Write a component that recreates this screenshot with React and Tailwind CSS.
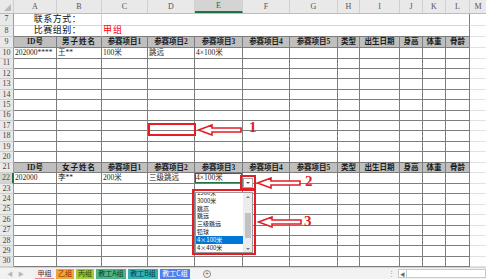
import React from "react";
import { clsx } from "clsx";

const W = [
  "w-[43px]",
  "w-[45px]",
  "w-[46px]",
  "w-[47px]",
  "w-[48px]",
  "w-[47px]",
  "w-[48px]",
  "w-[22px]",
  "w-[40px]",
  "w-[23px]",
  "w-[23px]",
  "w-[24px]",
];
const LETTERS = ["A", "B", "C", "D", "E", "F", "G", "H", "I", "J", "K", "L"];

const HEAD = (name) => [
  "ID号",
  name,
  "参赛项目1",
  "参赛项目2",
  "参赛项目3",
  "参赛项目4",
  "参赛项目5",
  "类型",
  "出生日期",
  "身高",
  "体重",
  "骨龄",
];

const empty = (n, h) =>
  Array.from({ length: n }, () => ({ h, kind: "data", cells: [] }));

const ROWS = [
  { n: 7, h: "h-[12px]", kind: "info", left: "联系方式：" },
  { n: 8, h: "h-[12px]", kind: "info", left: "比赛组别：", right: "甲组", last: true },
  { n: 9, h: "h-[11px]", kind: "head", cells: HEAD("男子姓名") },
  { n: 10, h: "h-[11px]", kind: "data", cells: ["202000****", "王**", "100米", "跳远", "4×100米"] },
  ...empty(10, "h-[10.7px]").map((r, i) => ({ ...r, n: 11 + i })),
  { n: 21, h: "h-[11px]", kind: "head", cells: HEAD("女子姓名") },
  { n: 22, h: "h-[11px]", kind: "data", sel: true, cells: ["202000", "李**", "200米", "三级跳远", "4×100米"] },
  ...empty(8, "h-[10.7px]").map((r, i) => ({ ...r, n: 23 + i })),
];

const LIST = ["1500米", "3000米", "跳高", "跳远", "三级跳远", "铅球", "4×100米", "4×400米"];

const TABS = [
  { t: "甲组", w: "w-[19px]", c: "bg-[#fbe9ec] text-[#333] border-b border-[#e88a9a]" },
  { t: "乙组", w: "w-[18px]", c: "bg-[#f3a33a] text-[#8a2a00]" },
  { t: "丙组", w: "w-[18px]", c: "bg-[#9ccd3c] text-[#2a3a00]" },
  { t: "教工A组", w: "w-[30px]", c: "bg-[#4bb487] text-[#0f3a26]" },
  { t: "教工B组", w: "w-[30px]", c: "bg-[#2fb2b6] text-[#083c40]" },
  { t: "教工C组", w: "w-[30px]", c: "bg-[#4f7ff0] text-white" },
];

function RowHead({ n, sel }) {
  return (
    <div
      className={clsx(
        "w-[14px] shrink-0 flex items-center justify-center border-b border-[#cfcfcf] text-[8px] leading-none",
        sel
          ? "bg-[#d4d4d4] text-[#1e6b41] border-r-2 border-r-[#217346]"
          : "bg-[#e9e9e9] text-[#444] border-r border-r-[#9a9a9a]"
      )}
    >
      {n}
    </div>
  );
}

function Arrow() {
  return (
    <svg width="46" height="12" viewBox="0 0 46 12">
      <polygon
        points="1.5,6 15,1 15,4 44,4 44,8 15,8 15,11"
        fill="#fff"
        stroke="#e41e26"
        strokeWidth="1.6"
      />
    </svg>
  );
}

function SheetRow({ row }) {
  if (row.kind === "info") {
    return (
      <div className={clsx("flex", row.h)}>
        <RowHead n={row.n} />
        <div
          className={clsx(
            "w-[88px] shrink-0 flex items-center justify-center border-r border-[#d4d4d4] text-[9px] leading-none text-[#111] tracking-[0.5px]",
            row.last ? "border-b border-b-[#7d7d7d]" : "border-b"
          )}
        >
          {row.left}
        </div>
        <div
          className={clsx(
            "w-[368px] shrink-0 flex items-center pl-[1px] border-r border-r-[#7d7d7d] text-[9px] leading-none text-[#ff0000] tracking-[1px]",
            row.last ? "border-b border-b-[#7d7d7d]" : "border-b border-b-[#d4d4d4]"
          )}
        >
          {row.right}
        </div>
        <div className="flex-1 border-b border-[#e2e2e2]" />
      </div>
    );
  }
  const head = row.kind === "head";
  return (
    <div className={clsx("flex", row.h)}>
      <RowHead n={row.n} sel={row.sel} />
      {W.map((w, i) => (
        <div
          key={i}
          className={clsx(
            "shrink-0 flex items-center border-r border-b border-[#7d7d7d] leading-none whitespace-nowrap overflow-hidden",
            w,
            head
              ? "bg-[#bfbfbf] justify-center font-bold text-[7.5px] text-[#1a1a1a]"
              : "pl-[1px] text-[7.5px] text-[#1a1a1a]",
            head && i === 1 && "tracking-[1px]",
            row.sel && i === 4 && "shadow-[inset_0_0_0_1px_#217346]"
          )}
        >
          {row.cells[i]}
        </div>
      ))}
      <div className="flex-1 border-b border-[#e2e2e2]" />
    </div>
  );
}

export default function App() {
  return (
    <div className="relative w-[486px] h-[279px] overflow-hidden bg-white flex flex-col font-['Liberation_Serif','Noto_Sans_CJK_SC',serif]">
      {/* sheet */}
      <div className="h-[267px] overflow-hidden flex flex-col">
        <div className="flex h-[14px] shrink-0 bg-[#e9e9e9] border-b border-[#bdbdbd]">
          <div className="w-[14px] shrink-0 flex items-end justify-end p-[2px] border-r border-[#cfcfcf]">
            <div className="w-0 h-0 border-l-[7px] border-l-transparent border-b-[7px] border-b-[#b9b9b9]" />
          </div>
          {W.map((w, i) => (
            <div
              key={i}
              className={clsx(
                "shrink-0 flex items-center justify-center border-r border-[#d0d0d0] text-[8px] leading-none",
                w,
                i === 4
                  ? "bg-[#d4d4d4] text-[#1e6b41] border-b-2 border-b-[#217346]"
                  : "text-[#555]"
              )}
            >
              {LETTERS[i]}
            </div>
          ))}
          <div className="flex-1 flex items-center justify-center text-[8px] leading-none text-[#555]">M</div>
        </div>
        {ROWS.map((r) => (
          <SheetRow key={r.n} row={r} />
        ))}
      </div>

      {/* sheet tabs */}
      <div className="h-[12px] shrink-0 flex items-center bg-[#f2f2f2] border-t border-[#d4d4d4] text-[7px] leading-none font-['Noto_Sans_CJK_SC',sans-serif]">
        <div className="w-[35px] shrink-0 flex items-center gap-[5px] pl-[7px] text-[6px] text-[#b8b8b8]">
          <span>◀</span>
          <span>▶</span>
        </div>
        <div className="flex items-center gap-[2px] h-full">
          {TABS.map((t) => (
            <div key={t.t} className={clsx("h-[10px] flex items-center justify-center shrink-0", t.w, t.c)}>
              {t.t}
            </div>
          ))}
        </div>
        <div className="ml-[13px] w-[8px] h-[8px] rounded-full border border-[#8a8a8a] flex items-center justify-center text-[7px] text-[#666]">
          +
        </div>
        <div className="ml-auto text-[7px] text-[#999] mr-[3px]">⋮</div>
        <div className="w-[9px] h-[9px] bg-white border border-[#c8c8c8] flex items-center justify-center text-[5px] text-[#666]">
          ◀
        </div>
        <div className="w-[79px] h-[9px] bg-white border border-l-0 border-[#c8c8c8]" />
      </div>

      {/* annotation 1 */}
      <div className="absolute left-[148px] top-[123px] w-[48px] h-[13px] border-2 border-[#e41e26]" />
      <div className="absolute left-[197px] top-[124px]">
        <Arrow />
      </div>
      <div className="absolute left-[249px] top-[120px] text-[15px] font-bold text-[#e41e26] leading-none">1</div>

      {/* annotation 2: dropdown button */}
      <div className="absolute left-[243px] top-[178px] w-[10px] h-[10px] bg-white border border-[#a8a8a8] flex items-center justify-center">
        <div className="w-0 h-0 border-l-[2px] border-r-[2px] border-t-[2px] border-l-transparent border-r-transparent border-t-[#555]" />
      </div>
      <div className="absolute left-[240px] top-[175px] w-[16px] h-[15px] border-2 border-[#e41e26]" />
      <div className="absolute left-[256px] top-[177px]">
        <Arrow />
      </div>
      <div className="absolute left-[305px] top-[174px] text-[15px] font-bold text-[#e41e26] leading-none">2</div>

      {/* annotation 3: dropdown list */}
      <div className="absolute left-[195px] top-[192px] w-[58px] h-[61px] bg-white border border-[#9a9a9a] overflow-hidden flex font-['Noto_Sans_CJK_SC',sans-serif]">
        <div className="flex-1 -mt-[4px] flex flex-col">
          {LIST.map((t) => (
            <div
              key={t}
              className={clsx(
                "h-[7.85px] shrink-0 flex items-center pl-[1px] text-[6px] leading-[6px] whitespace-nowrap",
                t === "4×100米" ? "bg-[#0078d7] text-white" : "text-[#111]"
              )}
            >
              {t}
            </div>
          ))}
        </div>
        <div className="w-[9px] shrink-0 bg-[#ececec] flex flex-col items-center">
          <div className="h-[7px] flex items-center">
            <div className="w-0 h-0 border-l-[2px] border-r-[2px] border-b-[2px] border-l-transparent border-r-transparent border-b-[#777]" />
          </div>
          <div className="mt-[13px] w-[6px] h-[25px] bg-[#c2c2c2]" />
          <div className="mt-auto h-[7px] flex items-center">
            <div className="w-0 h-0 border-l-[2px] border-r-[2px] border-t-[2px] border-l-transparent border-r-transparent border-t-[#777]" />
          </div>
        </div>
      </div>
      <div className="absolute left-[192px] top-[189px] w-[64px] h-[66px] border-2 border-[#e41e26]" />
      <div className="absolute left-[257px] top-[216px]">
        <Arrow />
      </div>
      <div className="absolute left-[304px] top-[214px] text-[15px] font-bold text-[#e41e26] leading-none">3</div>
    </div>
  );
}
